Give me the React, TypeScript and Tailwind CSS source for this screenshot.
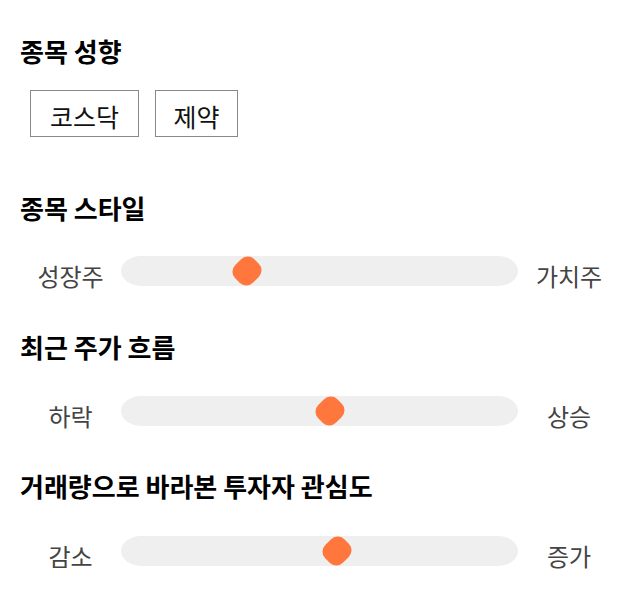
import React from "react";

const font = { fontFamily: '"Noto Sans CJK KR", "Noto Sans", sans-serif' };

function Heading({ children }: { children: React.ReactNode }) {
  return (
    <h2 className="text-[26px] font-bold leading-[32px] text-black">
      {children}
    </h2>
  );
}

function Slider({ left, right, pos }: { left: string; right: string; pos: number }) {
  return (
    <div className="flex items-center h-[30px]">
      <div className="w-[101px] text-center text-[24px] text-[#444] pt-[10px] leading-[30px]">
        {left}
      </div>
      <div className="relative flex-1 h-[30px] bg-[#efefef] rounded-[20px/15px]">
        <div
          className="absolute top-1/2 w-[25px] h-[25px] bg-[#ff773c] rounded-[9px] -translate-x-1/2 -translate-y-1/2 rotate-45 scale-y-[1.08]"
          style={{ left: `${pos * 100}%` }}
        />
      </div>
      <div className="w-[102px] text-center text-[24px] text-[#444] pt-[10px] leading-[30px]">
        {right}
      </div>
    </div>
  );
}

export default function App() {
  return (
    <div className="w-[640px] h-[606px] bg-white pl-[20px] pr-[20px] pt-[35px]" style={font}>
      <Heading>종목 성향</Heading>
      <div className="flex gap-[16px] ml-[10px] mt-[23px]">
        <div className="w-[109px] h-[47px] border border-[#888] flex items-center justify-center pt-[7px] text-[25px] text-[#111]">
          코스닥
        </div>
        <div className="w-[83px] h-[47px] border border-[#888] flex items-center justify-center pt-[7px] text-[25px] text-[#111]">
          제약
        </div>
      </div>

      <div className="mt-[55px]">
        <Heading>종목 스타일</Heading>
      </div>
      <div className="mt-[32px]">
        <Slider left="성장주" right="가치주" pos={0.317} />
      </div>

      <div className="mt-[45px]">
        <Heading>최근 주가 흐름</Heading>
      </div>
      <div className="mt-[33px]">
        <Slider left="하락" right="상승" pos={0.526} />
      </div>

      <div className="mt-[44px]">
        <Heading>거래량으로 바라본 투자자 관심도</Heading>
      </div>
      <div className="mt-[34px]">
        <Slider left="감소" right="증가" pos={0.544} />
      </div>
    </div>
  );
}
